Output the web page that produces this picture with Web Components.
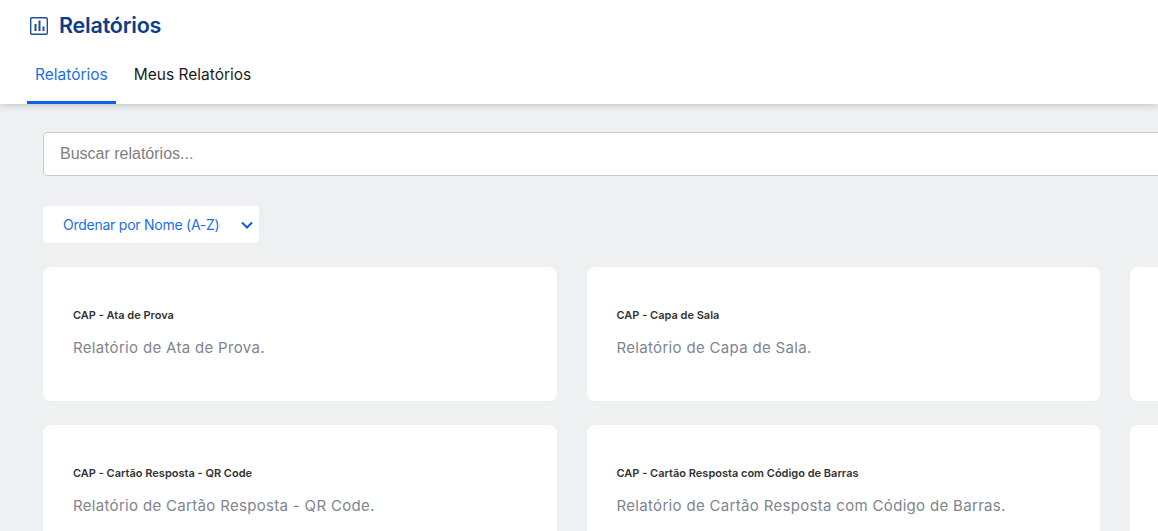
<!DOCTYPE html>
<html lang="pt-BR">
<head>
<meta charset="utf-8">
<title>Relatórios</title>
<style>
  html, body { margin: 0; height: 100%; overflow: hidden; background: #eff0f2; }
  body { font-family: "Inter", "Noto Sans", sans-serif; }
</style>
</head>
<body>
<app-header>
  <header-tab active>Relatórios</header-tab>
  <header-tab>Meus Relatórios</header-tab>
</app-header>
<report-page>
  <search-box placeholder="Buscar relatórios..."></search-box>
  <sort-select>Ordenar por Nome (A-Z)</sort-select>
  <report-grid>
    <report-card title="CAP - Ata de Prova">Relatório de Ata de Prova.</report-card>
    <report-card title="CAP - Capa de Sala">Relatório de Capa de Sala.</report-card>
    <report-card></report-card>
    <report-card title="CAP - Cartão Resposta - QR Code">Relatório de Cartão Resposta - QR Code.</report-card>
    <report-card title="CAP - Cartão Resposta com Código de Barras">Relatório de Cartão Resposta com Código de Barras.</report-card>
    <report-card></report-card>
  </report-grid>
</report-page>

<script>
// Top bar: page title plus the tab row
class AppHeader extends HTMLElement {
  constructor() {
    super();
    this.attachShadow({ mode: 'open' });
    this.shadowRoot.innerHTML = `
      <style>
        :host {
          display: block;
          height: 104px;
          background: #fff;
          box-shadow: 0 1px 8px rgba(0, 0, 0, 0.2);
          position: relative;
          box-sizing: border-box;
          padding: 13px 27px 0;
        }
        .title {
          display: flex;
          align-items: center;
          gap: 11px;
          height: 25px;
          padding-left: 3px;
          color: #0b3d8c;
          font-size: 21.5px;
          font-weight: 600;
          letter-spacing: -0.2px;
        }
        .title span { margin-top: -2px; }
        svg { width: 18px; height: 18px; flex: none; }
        .tabs { display: flex; margin-top: 18px; }
      </style>
      <div class="title">
        <svg viewBox="0 0 18 18" fill="none" stroke="#1f4f96">
          <rect x="0.7" y="0.7" width="16.6" height="16.6" rx="1.2" stroke-width="1.4"/>
          <path d="M5.5 7v7M9.5 3.5V14M13.5 9.5V14" stroke-width="2"/>
        </svg>
        <span>Relatórios</span>
      </div>
      <div class="tabs"><slot></slot></div>
    `;
  }
}
customElements.define('app-header', AppHeader);

class HeaderTab extends HTMLElement {
  constructor() {
    super();
    this.attachShadow({ mode: 'open' });
    this.shadowRoot.innerHTML = `
      <style>
        :host {
          display: block;
          height: 48px;
          box-sizing: border-box;
          padding: 9px 8px 0;
          margin-right: 10px;
          font-size: 15.5px;
          line-height: 20px;
          color: #1c1c1c;
          border-bottom: 3px solid transparent;
        }
        :host([active]) { color: #1a6fe8; border-bottom-color: #0d63e6; }
      </style>
      <slot></slot>
    `;
  }
}
customElements.define('header-tab', HeaderTab);

class ReportPage extends HTMLElement {
  constructor() {
    super();
    this.attachShadow({ mode: 'open' });
    this.shadowRoot.innerHTML = `
      <style>
        :host { display: block; padding: 28px 0 0 43px; }
      </style>
      <slot></slot>
    `;
  }
}
customElements.define('report-page', ReportPage);

class SearchBox extends HTMLElement {
  constructor() {
    super();
    this.attachShadow({ mode: 'open' });
    const placeholder = this.getAttribute('placeholder') || '';
    this.shadowRoot.innerHTML = `
      <style>
        :host { display: block; width: 1544px; height: 44px; }
        .box {
          box-sizing: border-box;
          height: 100%;
          background: #fff;
          border: 1px solid #ccc;
          border-radius: 4px;
          padding: 0 16px 1px;
          display: flex;
          align-items: center;
          font-family: "Liberation Sans", "Roboto", sans-serif;
          font-size: 16px;
          color: #808080;
        }
      </style>
      <div class="box">${placeholder}</div>
    `;
  }
}
customElements.define('search-box', SearchBox);

class SortSelect extends HTMLElement {
  constructor() {
    super();
    this.attachShadow({ mode: 'open' });
    this.shadowRoot.innerHTML = `
      <style>
        :host {
          display: flex;
          align-items: center;
          justify-content: space-between;
          width: 216px;
          height: 37px;
          margin: 30px 0 24px;
          box-sizing: border-box;
          padding: 0 6px 0 20px;
          background: #fff;
          border-radius: 4px;
          color: #1a6fe8;
          font-size: 14px;
          letter-spacing: -0.25px;
        }
        svg { width: 12px; height: 8px; }
      </style>
      <span><slot></slot></span>
      <svg viewBox="0 0 12 8" fill="none" stroke="#0d5fd6" stroke-width="2"><path d="M1 1.5l5 5 5-5"/></svg>
    `;
  }
}
customElements.define('sort-select', SortSelect);

class ReportGrid extends HTMLElement {
  constructor() {
    super();
    this.attachShadow({ mode: 'open' });
    this.shadowRoot.innerHTML = `
      <style>
        :host {
          display: grid;
          width: 1600.5px;
          grid-template-columns: repeat(3, 513.5px);
          column-gap: 30px;
          row-gap: 24px;
        }
      </style>
      <slot></slot>
    `;
  }
}
customElements.define('report-grid', ReportGrid);

class ReportCard extends HTMLElement {
  constructor() {
    super();
    this.attachShadow({ mode: 'open' });
    const title = this.getAttribute('title') || '';
    this.shadowRoot.innerHTML = `
      <style>
        :host {
          display: block;
          height: 134px;
          box-sizing: border-box;
          padding: 40px 30px 0;
          background: #fff;
          border-radius: 8px;
        }
        .name {
          font-size: 11px;
          line-height: 16px;
          font-weight: 600;
          color: #333;
        }
        .desc {
          margin-top: 15px;
          font-size: 15px;
          line-height: 20px;
          letter-spacing: 0.32px;
          color: #80858e;
        }
      </style>
      <div class="name">${title}</div>
      <div class="desc"><slot></slot></div>
    `;
  }
}
customElements.define('report-card', ReportCard);
</script>
</body>
</html>
